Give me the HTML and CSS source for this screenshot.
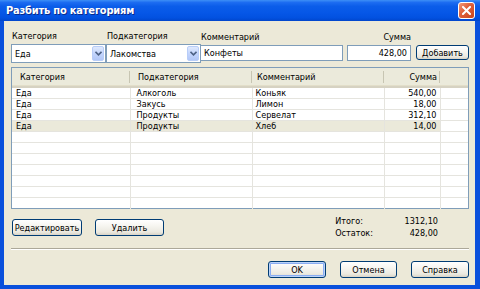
FILE: index.html
```html
<!DOCTYPE html>
<html>
<head>
<meta charset="UTF-8">
<title>Разбить по категориям</title>
<link rel="stylesheet" href="styles.css">
</head>
<body>
<div class="window">
	<div class="titlebar">
		<span class="title">Разбить по категориям</span>
		<span class="close">
			<svg width="9" height="9" viewBox="0 0 9 9"><path d="M1 1 L8 8 M8 1 L1 8" stroke="#fff" stroke-width="2" stroke-linecap="square"/></svg>
		</span>
	</div>
	<div class="body">
		<div class="entry">
			<div class="field f_cat">
				<label>Категория</label>
				<div class="combo"><span class="val">Еда</span><span class="drop"><svg width="7" height="5" viewBox="0 0 7 5"><path d="M0.5 0.8 L3.5 3.8 L6.5 0.8" fill="none" stroke="#4d6185" stroke-width="1.6"/></svg></span></div>
			</div>
			<div class="field f_sub">
				<label>Подкатегория</label>
				<div class="combo"><span class="val">Лакомства</span><span class="drop"><svg width="7" height="5" viewBox="0 0 7 5"><path d="M0.5 0.8 L3.5 3.8 L6.5 0.8" fill="none" stroke="#4d6185" stroke-width="1.6"/></svg></span></div>
			</div>
			<div class="field f_com">
				<label>Комментарий</label>
				<div class="edit">Конфеты</div>
			</div>
			<div class="field f_sum">
				<label>Сумма</label>
				<div class="edit num">428,00</div>
			</div>
			<div class="field f_add">
				<button class="btn add">Добавить</button>
			</div>
		</div>

		<div class="list">
			<table>
				<colgroup>
					<col style="width:118px"><col style="width:122px"><col style="width:132px"><col style="width:56px"><col>
				</colgroup>
				<thead>
					<tr><th class="c1">Категория</th><th class="c2">Подкатегория</th><th class="c3">Комментарий</th><th class="c4">Сумма</th><th class="c5"></th></tr>
				</thead>
				<tbody>
					<tr><td class="c1">Еда</td><td class="c2">Алкоголь</td><td class="c3">Коньяк</td><td class="c4">540,00</td><td></td></tr>
					<tr><td class="c1">Еда</td><td class="c2">Закусь</td><td class="c3">Лимон</td><td class="c4">18,00</td><td></td></tr>
					<tr><td class="c1">Еда</td><td class="c2">Продукты</td><td class="c3">Сервелат</td><td class="c4">312,10</td><td></td></tr>
					<tr class="sel"><td class="c1">Еда</td><td class="c2">Продукты</td><td class="c3">Хлеб</td><td class="c4">14,00</td><td></td></tr>
					<tr><td></td><td></td><td></td><td></td><td></td></tr>
					<tr><td></td><td></td><td></td><td></td><td></td></tr>
					<tr><td></td><td></td><td></td><td></td><td></td></tr>
					<tr><td></td><td></td><td></td><td></td><td></td></tr>
					<tr><td></td><td></td><td></td><td></td><td></td></tr>
					<tr><td></td><td></td><td></td><td></td><td></td></tr>
					<tr class="last"><td></td><td></td><td></td><td></td><td></td></tr>
				</tbody>
			</table>
		</div>

		<div class="actions">
			<div class="left_btns">
				<button class="btn edit_btn">Редактировать</button>
				<button class="btn del_btn">Удалить</button>
			</div>
			<div class="totals">
				<span class="lbl">Итого:</span><span class="amt">1312,10</span>
				<span class="lbl">Остаток:</span><span class="amt">428,00</span>
			</div>
		</div>

		<div class="sep"></div>

		<div class="footer">
			<button class="btn ok">OK</button>
			<button class="btn cancel">Отмена</button>
			<button class="btn help">Справка</button>
		</div>
	</div>
</div>
</body>
</html>
```

FILE: styles.css
```css
* { margin:0; padding:0; box-sizing:border-box; }
body { width:480px; height:289px; overflow:hidden; background:#ece9d8; font-family:"DejaVu Sans Condensed", "DejaVu Sans", sans-serif; font-stretch:condensed; font-size:9px; color:#000; }

.window { width:480px; height:289px; display:flex; flex-direction:column; background:#0a50dc; padding:0 5px 4px 4px; }

/* title bar */
.titlebar { height:21px; margin:0 -5px 0 -4px; display:flex; align-items:center; justify-content:space-between; padding:0 5px 0 6px;
	background:linear-gradient(to bottom, #3d8ff6 0, #1c6cf1 12%, #0b5de9 30%, #0657e7 60%, #0251e0 85%, #0146cb 100%); }
.title { color:#fff; font-weight:bold; font-size:11px; letter-spacing:-0.2px; text-shadow:1px 1px 0 #0b2a8a; }
.close { width:17px; height:17px; border:1px solid #fff; border-radius:3px; display:flex; align-items:center; justify-content:center;
	background:linear-gradient(135deg, #f19a7a 0, #e0623d 40%, #c9441c 100%); }

.body { flex:1; background:#ece9d8; padding:9px 6px 7px 7px; }

/* entry row */
.entry { display:flex; align-items:flex-end; height:33px; }
.field { display:flex; flex-direction:column; }
.field label { height:13px; line-height:13px; padding-left:1px; margin-bottom:1px; }
.f_cat, .f_sub { width:95px; }
.f_sub { margin-left:0; }
.f_com { width:143px; margin-left:-1px; }
.f_sum { width:64px; margin-left:4px; }
.f_sum label { text-align:right; padding-right:0; }
.f_add { margin-left:5px; width:53px; margin-bottom:3px; }

.combo { height:19px; background:#fff; border:1px solid #7f9db9; display:flex; align-items:center; padding:1px; }
.combo .val { flex:1; padding-left:2px; }
.drop { width:12px; height:15px; border:1px solid #b8cdf8; border-radius:2px; display:flex; align-items:center; justify-content:center;
	background:linear-gradient(to bottom, #dfe9fd 0, #c3d5fd 50%, #b2c7f7 100%); }
.edit { height:16px; margin-bottom:2px; background:#fff; border:1px solid #7f9db9; line-height:14px; padding-left:3px; }
.edit.num { text-align:right; padding-right:3px; }

/* buttons */
.btn { height:17px; border:1px solid #003c74; border-radius:3px; font:inherit; font-stretch:condensed; color:#000;
	background:linear-gradient(to bottom, #ffffff 0, #f6f5f0 40%, #ebe9e0 80%, #d8d3c6 100%); }
.add { width:53px; height:15px; }

/* list */
.list { margin-top:4px; height:142px; border:1px solid #7f9db9; background:#fff; }
.list table { width:456px; border-collapse:collapse; table-layout:fixed; }
.list th { height:19px; font-weight:normal; text-align:left; background:#ebeadb; border-bottom:2px solid #d6d2c2; box-shadow:inset 0 -1px 0 #e2dec9;
	position:relative; padding:0; }
.list th:not(.c5)::after { content:""; position:absolute; right:0; top:3px; bottom:3px; width:1px; background:#c7c5b2; box-shadow:1px 0 0 #fff; }
.list th.c1 { padding-left:8px; }
.list th.c2 { padding-left:8px; }
.list th.c3 { padding-left:5px; }
.list th.c4 { text-align:right; padding-right:3px; }
.list td { height:11px; line-height:10px; padding:0; border-bottom:1px solid #e5e4de; border-right:1px solid #e5e4de; white-space:nowrap; overflow:hidden; }
.list td:last-child { border-right:none; }
.list tr.last td { border-bottom:none; }
.list td.c1 { padding-left:4px; }
.list td.c2 { padding-left:6px; }
.list td.c3 { padding-left:3px; }
.list td.c4 { text-align:right; padding-right:3px; }
.list tr.sel td:not(:last-child) { background:#ebe9da; }

/* under list */
.actions { display:flex; justify-content:space-between; margin-top:6px; height:24px; }
.left_btns { display:flex; gap:13px; padding-top:4px; padding-left:1px; }
.edit_btn { width:70px; }
.del_btn { width:69px; }
.totals { display:grid; grid-template-columns:auto 65px; grid-auto-rows:12px; line-height:12px; padding-right:31px; }
.totals .amt { text-align:right; }

.sep { margin-top:9px; height:2px; border-top:1px solid #aca899; border-bottom:1px solid #fff; }

.footer { margin-top:11px; display:flex; justify-content:flex-end; gap:14px; padding-right:0; }
.ok { width:58px; box-shadow:inset 0 0 0 1px #bbd3f8, inset 0 0 0 2px #8aadf3; }
.cancel { width:57px; }
.help { width:58px; }
```
